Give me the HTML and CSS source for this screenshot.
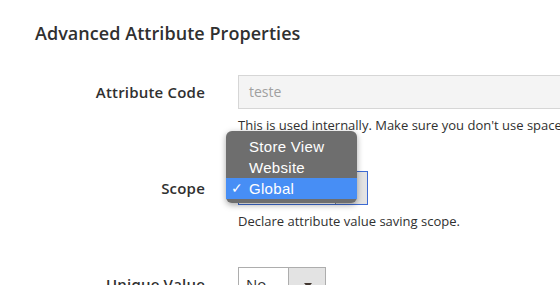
FILE: index.html
```html
<!DOCTYPE html>
<html>
<head>
<meta charset="utf-8">
<link rel="stylesheet" href="styles.css">
</head>
<body>
<div class="page">
  <h2 class="title">Advanced Attribute Properties</h2>
  <div class="fields">
    <div class="field">
      <div class="label">Attribute Code</div>
      <div class="control">
        <div class="input input-disabled">teste</div>
        <div class="note">This is used internally. Make sure you don't use spaces or more than 60 symbols.</div>
      </div>
    </div>
    <div class="field">
      <div class="label">Scope</div>
      <div class="control">
        <div class="select select-focus select-scope">
          <span class="select-value">Global</span>
          <span class="select-arrow"></span>
        </div>
        <div class="note">Declare attribute value saving scope.</div>
        <div class="popup">
          <div class="popup-item">Store View</div>
          <div class="popup-item">Website</div>
          <div class="popup-item popup-item-active"><span class="check">✓</span>Global</div>
        </div>
      </div>
    </div>
    <div class="field">
      <div class="label">Unique Value</div>
      <div class="control">
        <div class="select select-unique">
          <span class="select-value">No</span>
          <span class="select-arrow"><span class="tri"></span></span>
        </div>
      </div>
    </div>
  </div>
</div>
</body>
</html>
```
FILE: styles.css
```css
html, body {
  margin: 0;
  padding: 0;
  background: #fff;
  overflow: hidden;
}
body {
  width: 560px;
  height: 285px;
  font-family: "Open Sans", "Noto Sans", sans-serif;
  color: #303030;
}
.page {
  padding-top: 19px;
}
.title {
  margin: 0 0 0 35px;
  font-size: 18px;
  font-weight: 600;
  line-height: 28px;
  letter-spacing: 0.05px;
  color: #303030;
}
.fields {
  margin-top: 28px;
  display: flex;
  flex-direction: column;
  gap: 36px;
}
.field {
  display: grid;
  grid-template-columns: 205px 400px;
  column-gap: 33px;
}
.label {
  text-align: right;
  font-size: 15px;
  font-weight: 600;
  letter-spacing: 0.2px;
  line-height: 20px;
  padding-top: 7px;
  white-space: nowrap;
}
.control {
  position: relative;
}
.input {
  box-sizing: border-box;
  height: 34px;
  border: 1px solid #d6d6d6;
  padding: 0 10px;
  font-size: 14px;
  line-height: 32px;
}
.input-disabled {
  background: #f4f4f4;
  color: #a0a0a0;
}
.note {
  margin-top: 7px;
  font-size: 13px;
  line-height: 19px;
  white-space: nowrap;
  color: #303030;
}
.select {
  box-sizing: border-box;
  height: 34px;
  border: 1px solid #adadad;
  display: flex;
  font-size: 15px;
  line-height: 32px;
  background: #fff;
}
.select-scope {
  width: 130px;
}
.select-unique {
  width: 88px;
}
.select-focus {
  border-color: #3d6bd3;
}
.select-value {
  flex: 1;
  padding-left: 7px;
}
.select-arrow {
  width: 36px;
  background: #e3e3e3;
  border-left: 1px solid #adadad;
  position: relative;
}
.select-focus .select-arrow {
  width: 31px;
  border-left-color: #8a8a8a;
}
.tri {
  position: absolute;
  left: 15px;
  top: 15px;
  width: 0;
  height: 0;
  border-left: 4px solid transparent;
  border-right: 4px solid transparent;
  border-top: 5px solid #41362f;
}
.popup {
  position: absolute;
  left: -12px;
  top: -40px;
  width: 131px;
  box-sizing: border-box;
  padding: 5px 0 4px;
  background: #6e6e6e;
  border-radius: 6px;
  box-shadow: 0 2px 6px rgba(0, 0, 0, 0.35);
  font-family: "Liberation Sans", Arial, sans-serif;
  font-size: 15px;
  letter-spacing: 0.3px;
  color: #fff;
}
.popup-item {
  height: 21px;
  line-height: 21px;
  padding-left: 23px;
  position: relative;
}
.popup-item-active {
  background: #478ef5;
}
.check {
  position: absolute;
  left: 5px;
  top: 0;
  font-size: 14px;
}
```
